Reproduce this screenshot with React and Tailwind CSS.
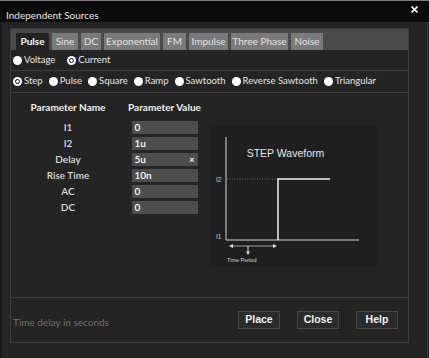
import React from "react";

const tabs = [
  ["Pulse", "w-[33px]", true],
  ["Sine", "w-[26px]"],
  ["DC", "w-[20px]"],
  ["Exponential", "w-[56px]"],
  ["FM", "w-[23px]"],
  ["Impulse", "w-[39px]"],
  ["Three Phase", "w-[57px]"],
  ["Noise", "w-[32px]"],
];

function Radio({ checked, label }) {
  return (
    <div className="flex items-center gap-[2px] whitespace-nowrap">
      {checked ? (
        <span className="w-[9px] h-[9px] rounded-full bg-white flex items-center justify-center shrink-0">
          <span className="w-[5px] h-[5px] rounded-full border-[1.5px] border-[#111] bg-white" />
        </span>
      ) : (
        <span className="w-[9px] h-[9px] rounded-full bg-white shrink-0" />
      )}
      <span>{label}</span>
    </div>
  );
}

const params = [
  ["I1", "0"],
  ["I2", "1u"],
  ["Delay", "5u", true],
  ["Rise Time", "10n"],
  ["AC", "0"],
  ["DC", "0"],
];

export default function App() {
  return (
    <div
      className="w-[429px] h-[358px] bg-[#242424] overflow-hidden flex flex-col text-[10px] text-[#e6e6e6] border-t border-[#7a7a7a]"
      style={{ fontFamily: "Lato, 'Noto Sans', sans-serif" }}
    >
      {/* title bar */}
      <div className="h-[21px] bg-[#0b0b0b] flex items-start justify-between pl-[6px] pr-[11px] shrink-0">
        <span className="text-[10px] leading-[12px] mt-[8px] text-[#e8e8e8]">Independent Sources</span>
        <svg width="7" height="7" viewBox="0 0 7 7" className="mt-[5px]">
          <path d="M0.5 0.5 L6.5 6.5 M6.5 0.5 L0.5 6.5" stroke="#fff" strokeWidth="1.6" />
        </svg>
      </div>

      <div className="flex-1 flex border-l-[2px] border-[#1a1a1a]">
        <div className="w-[399px] ml-[8px] mt-[6px] h-[315px] border border-[#3c3c3c] flex flex-col">
          {/* tab strip */}
          <div className="h-[21px] bg-[#4a4a4a] flex items-end gap-[3px] pl-[5px] shrink-0">
            {tabs.map(([t, w, active]) => (
              <div
                key={t}
                className={`${w} h-[17px] flex items-center justify-center whitespace-nowrap ${
                  active ? "bg-[#222222] text-white font-bold" : "bg-[#7a7a7a] text-[#e2e2e2]"
                }`}
              >
                {t}
              </div>
            ))}
          </div>
          {/* row 1 */}
          <div className="h-[21px] border-b border-[#3c3c3c] flex items-center gap-[12px] pl-[2px] shrink-0 text-[9.5px]">
            <Radio label="Voltage" />
            <Radio checked label="Current" />
          </div>
          {/* row 2 */}
          <div className="h-[22px] border-b border-[#3c3c3c] flex items-center gap-[6px] pl-[2px] shrink-0 text-[9.5px]">
            <Radio checked label="Step" />
            <Radio label="Pulse" />
            <Radio label="Square" />
            <Radio label="Ramp" />
            <Radio label="Sawtooth" />
            <Radio label="Reverse Sawtooth" />
            <Radio label="Triangular" />
          </div>
          {/* params */}
          <div className="flex-1 flex">
            <div className="ml-[20px] pt-[7px] flex flex-col">
              <div className="flex font-bold text-[#f0f0f0] h-[14px] items-center whitespace-nowrap">
                <div className="w-[74px] flex justify-center">Parameter Name</div>
                <div className="w-[73px] ml-[23px] flex justify-center">Parameter Value</div>
              </div>
              <div className="flex flex-col gap-[3px] mt-[7px]">
                {params.map(([n, v, x]) => (
                  <div key={n} className="flex h-[13px] items-center">
                    <div className="w-[74px] text-center font-semibold text-[#dcdcdc] whitespace-nowrap">{n}</div>
                    <div className="w-[73px] ml-[23px] flex justify-center">
                      <div className="w-[66px] h-[13px] bg-[#4d4d4d] flex items-center justify-between px-[3px] font-semibold text-white">
                        <span>{v}</span>
                        {x && <span className="text-[9px] font-bold">×</span>}
                      </div>
                    </div>
                  </div>
                ))}
              </div>
            </div>
            <div className="ml-[9px] mt-[32px] w-[167px] h-[142px] bg-[#1f1f1f]">
              <svg width="167" height="142" viewBox="0 0 167 142">
                <line x1="16" y1="12" x2="16" y2="115" stroke="#9a9a9a" strokeWidth="1.5" />
                <line x1="16" y1="115" x2="149" y2="115" stroke="#9a9a9a" strokeWidth="1.5" />
                <line x1="17" y1="54" x2="68" y2="54" stroke="#8a8a8a" strokeWidth="0.8" strokeDasharray="1 1.5" />
                <path d="M68 115 V54 H120" fill="none" stroke="#f2f2f2" strokeWidth="1.5" />
                <text x="75.5" y="32" textAnchor="middle" fontSize="10.5" fill="#e6e6e6" fontFamily="'Liberation Sans', Arial, sans-serif">STEP Waveform</text>
                <text x="6" y="57" fontSize="6.5" fill="#d0d0d0" fontFamily="'Liberation Sans', Arial, sans-serif">I2</text>
                <text x="6" y="114" fontSize="6.5" fill="#d0d0d0" fontFamily="'Liberation Sans', Arial, sans-serif">I1</text>
                <line x1="22" y1="121" x2="64" y2="121" stroke="#a0a0a0" strokeWidth="1" />
                <path d="M19 121 L23 119 L23 123 Z" fill="#e0e0e0" />
                <path d="M67 121 L63 119 L63 123 Z" fill="#e0e0e0" />
                <line x1="38" y1="121" x2="38" y2="127" stroke="#e0e0e0" strokeWidth="1" />
                <path d="M38 130 L36 126.5 L40 126.5 Z" fill="#e0e0e0" />
                <text x="17" y="137" fontSize="5.5" fill="#d8d8d8" fontFamily="'Liberation Sans', Arial, sans-serif">Time Period</text>
              </svg>
            </div>
          </div>
          {/* footer */}
          <div className="h-[45px] border-t border-[#3c3c3c] flex items-start shrink-0">
            <div className="mt-[17px] ml-[2px] text-[#6e6e6e] flex-1">Time delay in seconds</div>
            <div className="flex gap-[17px] mt-[13px] mr-[10px]">
              {["Place", "Close", "Help"].map((b) => (
                <div
                  key={b}
                  className="w-[42px] h-[18px] bg-[#2b2b2b] border border-[#484848] flex items-center justify-center font-semibold text-[#f2f2f2] text-[10.5px]"
                  style={{ fontFamily: "'Liberation Sans', Arial, sans-serif" }}
                >
                  {b}
                </div>
              ))}
            </div>
          </div>
        </div>
        <div className="ml-[18px] w-[1px] bg-[#3e3e3e]" />
      </div>
    </div>
  );
}
